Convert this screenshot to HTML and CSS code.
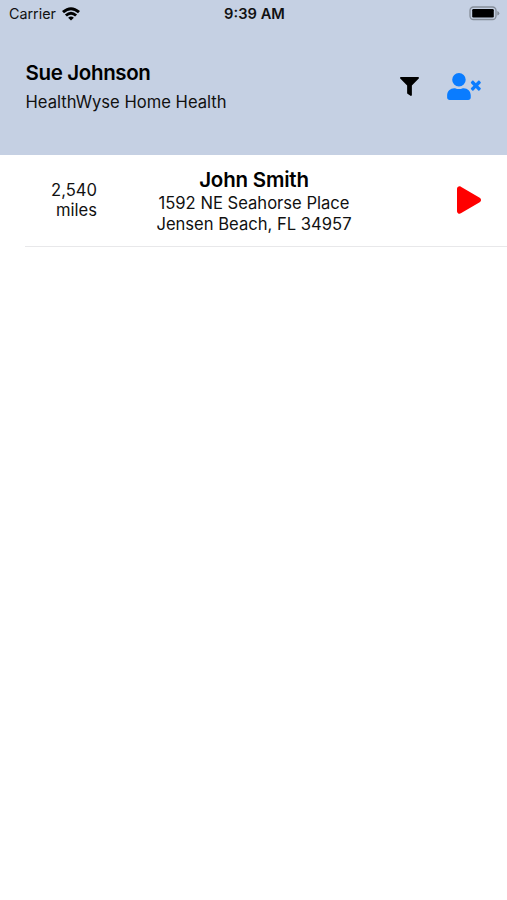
FILE: index.html
```html
<!DOCTYPE html>
<html lang="en">
<head>
  <meta charset="UTF-8">
  <title>Visits</title>
  <link rel="stylesheet" href="styles.css">
</head>
<body>
  <header>
    <div class="status-bar">
      <div class="carrier">
        <span>Carrier</span>
        <svg class="wifi" viewBox="0 0 18 14" width="18" height="14" fill="none" stroke="#000" stroke-width="3">
          <path d="M1 5.2Q9 -1.8 17 5.2"/>
          <path d="M3.9 8.5Q9 4 14.1 8.5"/>
          <path d="M6.1 10.7Q9 8.3 11.9 10.7L9 13.6Z" fill="#000" stroke="none"/>
        </svg>
      </div>
      <span class="time">9:39 AM</span>
      <div class="battery">
        <svg viewBox="0 0 31 15" width="31" height="15">
          <rect x="1" y="1" width="26" height="12.5" rx="3.5" fill="none" stroke="#858d99" stroke-width="1.3"/>
          <rect x="3.2" y="3" width="21.6" height="8.5" rx="1.2"/>
          <path d="M28.3 5v4.6q2-.7 2-2.3t-2-2.3z" fill="#858d99"/>
        </svg>
      </div>
    </div>

    <div class="user-bar">
      <div class="user">
        <h1>Sue Johnson</h1>
        <p>HealthWyse Home Health</p>
      </div>
      <div class="actions">
        <svg class="filter" viewBox="0 0 512 512" width="19" height="19">
          <path d="M488 0H24C3 0-8 26 7 41l185 185v206c0 8 4 15 10 20l80 56c16 11 38 0 38-20V226L505 41c15-15 4-41-17-41z"/>
        </svg>
        <svg class="user-remove" viewBox="0 0 640 512" width="34" height="27" fill="#0a7cff">
          <path d="M224 256a128 128 0 1 0 0-256 128 128 0 0 0 0 256zm90 32h-17a174 174 0 0 1-146 0h-17C60 288 0 348 0 422v42c0 27 21 48 48 48h352c27 0 48-21 48-48v-42c0-74-60-134-134-134z"/>
          <path d="M589 240l46-46c6-7 6-16 0-22l-23-23c-6-6-16-6-22 0l-46 46-45-46c-7-6-16-6-23 0l-22 23c-7 6-7 15 0 22l45 46-45 45c-7 7-7 16 0 23l22 22c7 7 16 7 23 0l45-45 46 45c6 7 16 7 22 0l23-22c6-7 6-16 0-23z"/>
        </svg>
      </div>
    </div>
  </header>

  <main class="visits">
    <div class="visit">
      <p class="distance">2,540<br>miles</p>
      <div class="patient">
        <h2>John Smith</h2>
        <p>1592 NE Seahorse Place<br>Jensen Beach, FL 34957</p>
      </div>
      <svg class="play" viewBox="0 0 448 512" width="24" height="28" fill="#f00">
        <path d="M424 215L72 7C44-10 0 6 0 48v416c0 38 41 60 72 41l352-208c32-18 32-64 0-82z"/>
      </svg>
    </div>
  </main>
</body>
</html>
```

FILE: styles.css
```css
* {
  box-sizing: border-box;
}
body {
  margin: 0;
  background: #fff;
  color: #111;
  font-family: Inter, "Liberation Sans", sans-serif;
}
h1, h2, p {
  margin: 0;
}
svg {
  display: block;
}
header {
  height: 155px;
  background: #c5d0e3;
}
.status-bar {
  display: grid;
  grid-template-columns: 1fr auto 1fr;
  align-items: center;
  height: 27px;
  padding: 0 7px 0 9px;
  font-size: 14.3px;
}
.carrier {
  display: flex;
  align-items: center;
  gap: 6px;
}
.time {
  font-size: 14.7px;
  font-weight: 600;
}
.battery {
  justify-self: end;
}
.user-bar {
  display: flex;
  justify-content: space-between;
  padding: 33px 26px 0 25.5px;
}
.user h1 {
  font-size: 20.5px;
  font-weight: 600;
  line-height: 26px;
  letter-spacing: -0.35px;
  color: #000;
}
.user p {
  margin-top: 6px;
  font-size: 16.6px;
  line-height: 21px;
}
.actions {
  display: flex;
  align-items: center;
  align-self: flex-start;
  gap: 28px;
  padding-top: 13px;
}
.visit {
  display: grid;
  grid-template-columns: 72px 1fr 70px;
  align-items: center;
  height: 92px;
  margin-left: 25px;
  padding-right: 26px;
  border-bottom: 1px solid #e8e8ea;
  font-size: 16.6px;
  line-height: 20.5px;
}
.distance {
  padding-bottom: 1px;
  text-align: right;
}
.patient {
  text-align: center;
}
.patient h2 {
  font-size: 20.5px;
  font-weight: 600;
  line-height: 26px;
  letter-spacing: -0.2px;
  color: #000;
}
.play {
  justify-self: end;
  margin-bottom: 2px;
}
```
